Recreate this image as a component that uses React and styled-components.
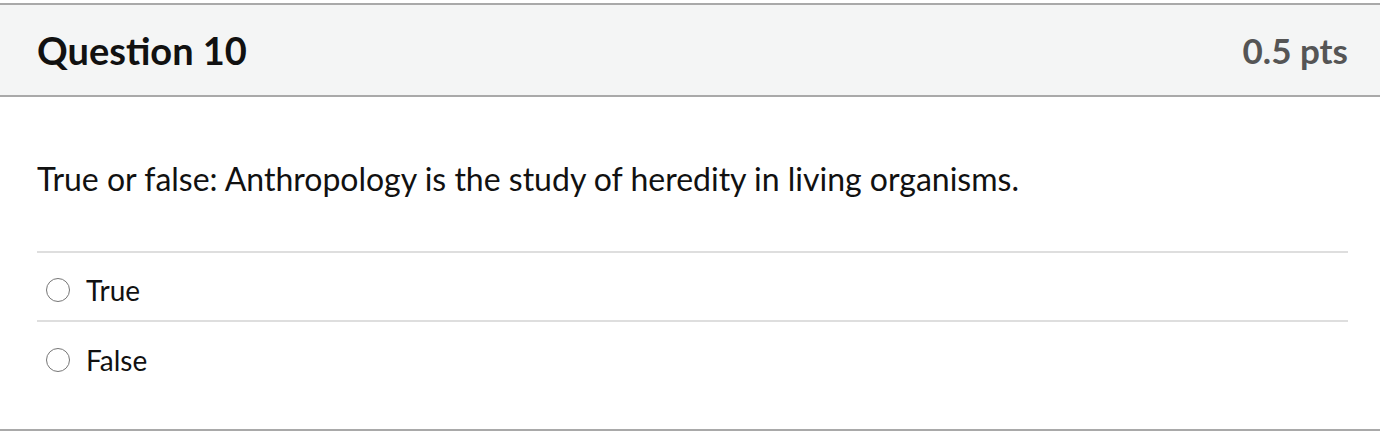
import React from "react";
import styled, { createGlobalStyle } from "styled-components";

const Global = createGlobalStyle`
  html, body { margin: 0; padding: 0; background: #fff; }
  body { font-family: Lato, "Noto Sans", sans-serif; color: #2d3b45; }
`;

const Card = styled.section`
  margin-top: 3px;
  border-top: 2px solid #a9a9a9;
  border-bottom: 2px solid #a9a9a9;
  background: #fff;
`;

const Header = styled.header`
  display: flex;
  align-items: center;
  justify-content: space-between;
  height: 92px;
  padding: 0 32px 0 37px;
  background: #f4f5f5;
  border-bottom: 2px solid #a9a9a9;
  box-sizing: border-box;
`;

const Title = styled.h2`
  margin: 0;
  font-family: Lato, sans-serif;
  font-weight: 700;
  font-size: 38px;
  color: #111;
`;

const Points = styled.span`
  font-family: Lato, sans-serif;
  font-weight: 700;
  font-size: 35px;
  color: #555;
`;

const Body = styled.div`
  padding: 0 32px 38px 37px;
`;

const QuestionText = styled.p`
  margin: 0;
  padding: 64px 0 54px;
  font-size: 32px;
  line-height: 36px;
  color: #111;
  border-bottom: 2px solid #dedede;
`;

const Answer = styled.label`
  display: flex;
  align-items: center;
  gap: 16px;
  height: 69px;
  padding: 6px 0 0 9px;
  font-size: 28px;
  color: #111;
  box-sizing: border-box;
  border-bottom: ${(p) => (p.$last ? "none" : "2px solid #dedede")};
  cursor: pointer;
`;

const Radio = styled.span`
  width: 24px;
  height: 24px;
  border-radius: 50%;
  border: 1.5px solid #767676;
  box-sizing: border-box;
  flex: none;
`;

const answers = ["True", "False"];

export default function App() {
  return (
    <>
      <Global />
      <Card>
        <Header>
          <Title>Question 10</Title>
          <Points>0.5 pts</Points>
        </Header>
        <Body>
          <QuestionText>
            True or false: Anthropology is the study of heredity in living organisms.
          </QuestionText>
          {answers.map((a, i) => (
            <Answer key={a} $last={i === answers.length - 1}>
              <Radio />
              {a}
            </Answer>
          ))}
        </Body>
      </Card>
    </>
  );
}
